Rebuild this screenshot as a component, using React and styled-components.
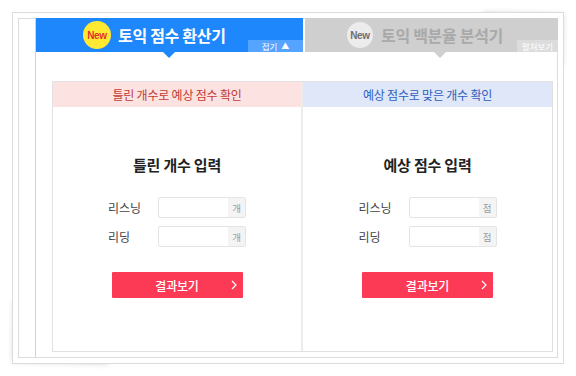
import React from "react";
import styled, { createGlobalStyle } from "styled-components";

const GlobalStyle = createGlobalStyle`
  html, body { margin: 0; padding: 0; background: #ffffff; }
  body { font-family: "Noto Sans CJK KR", "Noto Sans", sans-serif; }
  * { box-sizing: border-box; }
`;

const Page = styled.div`
  position: relative;
  z-index: 0;
  width: 576px;
  height: 376px;
  padding: 12px 13px 13px 12px;
`;

const Frame = styled.div`
  position: relative;
  width: 552px;
  height: 352px;
  padding: 5px;
  background: #fff;
  border: 1px solid #dcdcdc;

  &::before {
    content: "";
    position: absolute;
    right: 4px;
    top: 4px;
    width: 80px;
    height: 50px;
    z-index: -1;
    box-shadow: 3px -3px 6px rgba(0, 0, 0, 0.22);
    transform: rotate(1.2deg);
  }
  &::after {
    content: "";
    position: absolute;
    left: 4px;
    bottom: 4px;
    width: 95px;
    height: 60px;
    z-index: -1;
    box-shadow: -3px 3px 6px rgba(0, 0, 0, 0.22);
    transform: rotate(1.2deg);
  }
`;

const Sheet = styled.div`
  display: flex;
  height: 100%;
  border: 1px solid #dddddd;
`;

const Gutter = styled.div`
  width: 17px;
  flex: none;
  border-right: 1px solid #d2d2d2;
`;

const Main = styled.div`
  flex: 1;
  display: flex;
  flex-direction: column;
  margin-top: -1px;
  margin-right: -1px;
`;

const Tabs = styled.div`
  display: flex;
  gap: 2px;
  height: 34px;
  flex: none;
`;

const Tab = styled.div`
  position: relative;
  display: flex;
  width: ${(p) => p.$width}px;
  height: 34px;
  background: ${(p) => (p.$active ? "#1f87fc" : "#cfcfcf")};

  &::after {
    content: "";
    position: absolute;
    top: 34px;
    left: ${(p) => p.$arrow}px;
    border-left: 6px solid transparent;
    border-right: 6px solid transparent;
    border-top: 6px solid ${(p) => (p.$active ? "#1f87fc" : "#cfcfcf")};
  }
`;

const TitleGroup = styled.div`
  flex: 1;
  display: flex;
  align-items: center;
  padding-left: ${(p) => p.$pad}px;
  gap: ${(p) => p.$gap}px;
`;

const NewBadge = styled.span`
  display: flex;
  align-items: center;
  justify-content: center;
  width: ${(p) => p.$size}px;
  height: ${(p) => p.$size}px;
  border-radius: 50%;
  background: ${(p) => (p.$active ? "#ffe933" : "#ececec")};
  color: ${(p) => (p.$active ? "#e2322b" : "#6f6f6f")};
  font-family: "Liberation Sans", Arial, sans-serif;
  font-weight: 700;
  font-size: 10px;
  letter-spacing: -0.3px;
`;

const TabTitle = styled.span`
  font-size: 16px;
  font-weight: 700;
  letter-spacing: -0.3px;
  color: ${(p) => (p.$active ? "#ffffff" : "#a9a9a9")};
  line-height: 1;
  margin-top: -1px;
`;

const FoldButton = styled.span`
  align-self: flex-end;
  display: flex;
  align-items: center;
  justify-content: center;
  gap: 4px;
  width: ${(p) => p.$width}px;
  height: 12px;
  background: ${(p) => (p.$active ? "#55a4ff" : "#dcdcdc")};
  color: #ffffff;
  font-size: 8.5px;
  line-height: 1;
`;

const Arrow = styled.span`
  font-size: 8px;
`;

const Content = styled.div`
  flex: 1;
  padding: 29px 5px 5px 16px;
`;

const Inner = styled.div`
  display: grid;
  grid-template-columns: 250px 1fr;
  height: 100%;
  border: 1px solid #e2e2e2;
`;

const Column = styled.div`
  display: flex;
  flex-direction: column;
  border-right: ${(p) => (p.$divider ? "2px solid #ececec" : "none")};
`;

const StripHeader = styled.div`
  height: 25px;
  display: flex;
  align-items: center;
  justify-content: center;
  font-size: 12px;
  letter-spacing: -0.2px;
  background: ${(p) => (p.$tone === "red" ? "#fde2e2" : "#dfe7f9")};
  color: ${(p) => (p.$tone === "red" ? "#c33a32" : "#2f5fbf")};
`;

const Body = styled.div`
  display: flex;
  flex-direction: column;
  align-items: center;
  padding-top: 47px;
`;

const Heading = styled.h2`
  margin: 0 0 21px;
  font-size: 15px;
  line-height: 22px;
  font-weight: 700;
  color: #222222;
  letter-spacing: -0.2px;
`;

const Rows = styled.div`
  display: flex;
  flex-direction: column;
  gap: 8px;
  margin-bottom: 25px;
`;

const Row = styled.div`
  display: flex;
  align-items: center;
`;

const Label = styled.span`
  width: 50px;
  font-size: 12px;
  color: #444444;
`;

const InputBox = styled.div`
  display: flex;
  width: 88px;
  height: 21px;
  border: 1px solid #e4e4e4;
  border-radius: 2px;
  overflow: hidden;
  background: #fff;
`;

const Field = styled.input`
  flex: 1;
  min-width: 0;
  border: none;
  outline: none;
  background: transparent;
  padding: 0 4px;
  font-size: 11px;
`;

const Unit = styled.span`
  width: 17px;
  display: flex;
  align-items: center;
  justify-content: center;
  background: #f4f4f4;
  color: #9a9a9a;
  font-size: 9.5px;
`;

const ResultButton = styled.button`
  position: relative;
  width: 131px;
  height: 26px;
  border: none;
  border-radius: 1px;
  background: #fd3a56;
  color: #ffffff;
  font-family: inherit;
  font-size: 12px;
  font-weight: 500;
  padding: 0;
  display: flex;
  align-items: center;
  justify-content: center;
  letter-spacing: -0.2px;
`;

const Chevron = styled.svg`
  position: absolute;
  right: 6px;
  top: 8px;
`;

function Calculator({ tone, stripText, heading, unit, divider }) {
  return (
    <Column $divider={divider}>
      <StripHeader $tone={tone}>{stripText}</StripHeader>
      <Body>
        <Heading>{heading}</Heading>
        <Rows>
          {["리스닝", "리딩"].map((l) => (
            <Row key={l}>
              <Label>{l}</Label>
              <InputBox>
                <Field type="text" />
                <Unit>{unit}</Unit>
              </InputBox>
            </Row>
          ))}
        </Rows>
        <ResultButton>
          결과보기
          <Chevron width="6" height="10" viewBox="0 0 6 10">
            <path d="M1 1 L5 5 L1 9" fill="none" stroke="#fff" strokeWidth="1.2" />
          </Chevron>
        </ResultButton>
      </Body>
    </Column>
  );
}

export default function App() {
  return (
    <>
      <GlobalStyle />
      <Page>
        <Frame>
          <Sheet>
            <Gutter />
            <Main>
              <Tabs>
                <Tab $active $width={267} $arrow={127}>
                  <TitleGroup $pad={47} $gap={7}>
                    <NewBadge $active $size={28}>New</NewBadge>
                    <TabTitle $active>토익 점수 환산기</TabTitle>
                  </TitleGroup>
                  <FoldButton $active $width={55}>
                    접기 <Arrow>▲</Arrow>
                  </FoldButton>
                </Tab>
                <Tab $width={253} $arrow={129}>
                  <TitleGroup $pad={42} $gap={8}>
                    <NewBadge $size={26}>New</NewBadge>
                    <TabTitle>토익 백분율 분석기</TabTitle>
                  </TitleGroup>
                  <FoldButton $width={41}>펼쳐보기</FoldButton>
                </Tab>
              </Tabs>
              <Content>
                <Inner>
                  <Calculator
                    divider
                    tone="red"
                    stripText="틀린 개수로 예상 점수 확인"
                    heading="틀린 개수 입력"
                    unit="개"
                  />
                  <Calculator
                    tone="blue"
                    stripText="예상 점수로 맞은 개수 확인"
                    heading="예상 점수 입력"
                    unit="점"
                  />
                </Inner>
              </Content>
            </Main>
          </Sheet>
        </Frame>
      </Page>
    </>
  );
}
